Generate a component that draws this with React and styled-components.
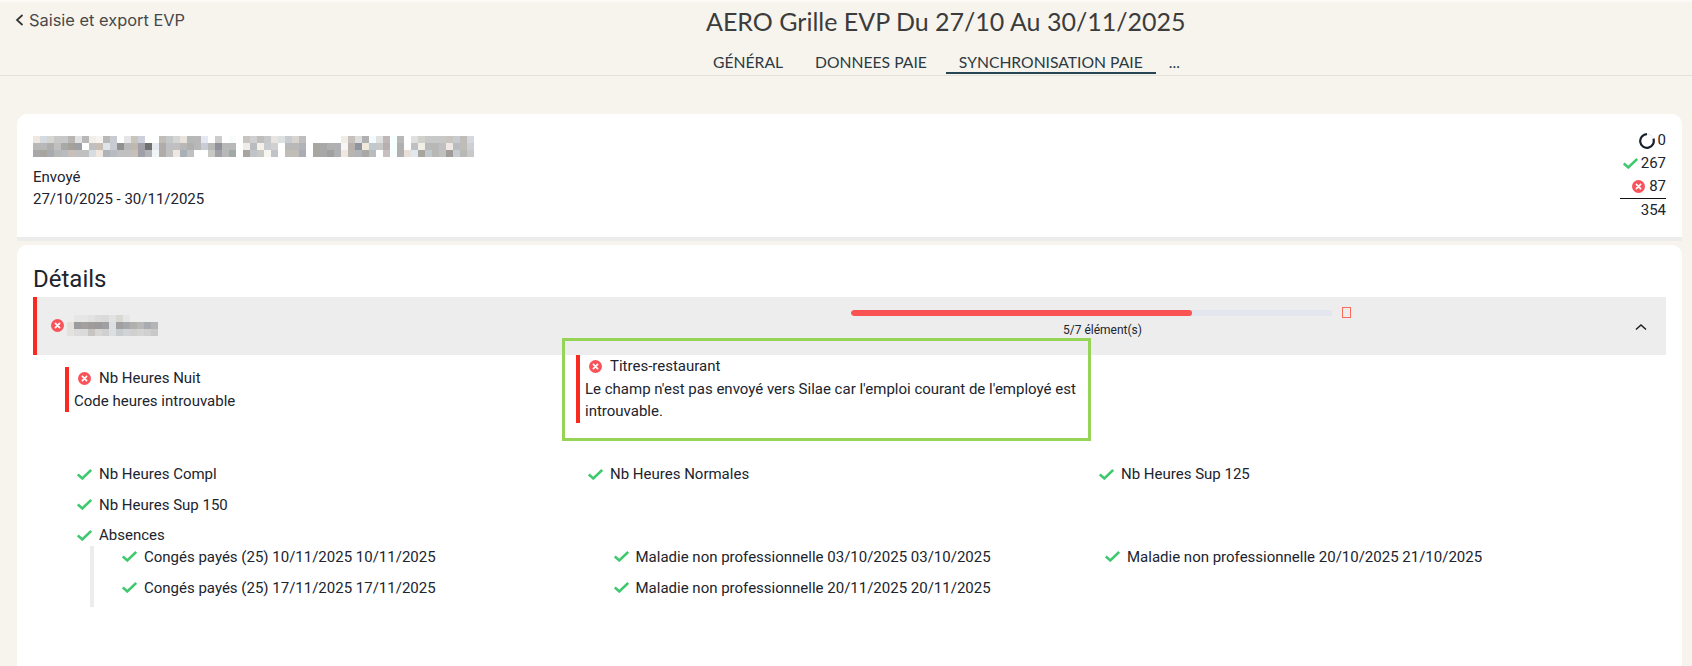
import React from "react";
import styled, { createGlobalStyle } from "styled-components";

const Global = createGlobalStyle`
  html, body { margin: 0; padding: 0; height: 666px; overflow: hidden; background: #f7f4ee; }
  body { font-family: Roboto, "Liberation Sans", sans-serif; color: #20242e; }
  * { box-sizing: border-box; }
`;

const Page = styled.div`
  height: 666px;
  overflow: hidden;
  border-top: 2px solid #fbfaf7;
`;
const Header = styled.header`
  height: 74px;
  border-bottom: 1px solid #e4e1da;
  display: flex;
`;
const BackLink = styled.a`
  width: 706px;
  flex: none;
  display: flex;
  align-items: flex-start;
  gap: 4px;
  padding: 8px 0 0 15px;
  font-family: Inter, sans-serif;
  font-size: 16.4px;
  line-height: 20px;
  color: #484848;
`;
const TitleBlock = styled.div`
  display: flex;
  flex-direction: column;
`;
const Title = styled.h1`
  margin: 0;
  padding-top: 3px;
  font-family: Lato, sans-serif;
  font-weight: 400;
  font-size: 25px;
  line-height: 32px;
  color: #3c3c3c;
  white-space: nowrap;
`;
const Tabs = styled.nav`
  display: flex;
  margin-top: 12px;
  margin-left: -6px;
  height: 26px;
  font-family: Lato, sans-serif;
  font-size: 15.7px;
  line-height: 26px;
  color: #2c3a42;
`;
const Tab = styled.div`
  padding: 0 13px;
  margin-right: ${(p) => p.$gap || 0}px;
  height: 25px;
  white-space: nowrap;
  border-bottom: 2px solid ${(p) => (p.$active ? "#264653" : "transparent")};
`;
const Main = styled.main`
  padding: 38px 10px 0 17px;
  display: flex;
  flex-direction: column;
  gap: 4px;
`;
const SummaryCard = styled.section`
  height: 127px;
  background: #fff;
  border-radius: 10px 10px 0 0;
  border-bottom: 4px solid #ececec;
  padding: 22px 16px 0;
  display: flex;
  justify-content: space-between;
`;
const SummaryText = styled.div`
  font-size: 15px;
  line-height: 22px;
`;
const Mosaic = styled.svg`
  display: block;
  shape-rendering: crispEdges;
`;
const SummaryMosaic = styled(Mosaic)`
  margin-bottom: 9px;
`;
const Counters = styled.div`
  margin-top: -7px;
  display: flex;
  flex-direction: column;
  align-items: flex-end;
  font-size: 15px;
  line-height: 23px;
`;
const Counter = styled.div`
  display: flex;
  align-items: center;
  gap: ${(p) => p.$gap}px;
  height: 23px;
`;
const Total = styled.div`
  width: 46px;
  border-top: 1px solid #111;
  text-align: right;
  line-height: 22px;
`;
const DetailsCard = styled.section`
  height: 440px;
  background: #fff;
  border-radius: 10px 10px 0 0;
  padding: 16px 16px 0;
`;
const DetailsTitle = styled.h2`
  margin: 0;
  font-size: 24px;
  font-weight: 400;
  line-height: 36px;
`;
const GroupRow = styled.div`
  height: 58px;
  background: #ededed;
  border-left: 4px solid #fb2a20;
  display: grid;
  grid-template-columns: 814px 503px 1fr;
  align-items: center;
`;
const GroupName = styled.div`
  display: flex;
  align-items: center;
  gap: 3px;
  padding-left: 14px;
  margin-top: -1px;
`;
const Progress = styled.div`
  display: flex;
  flex-direction: column;
  align-items: center;
  margin-top: -8px;
`;
const ProgressLine = styled.div`
  align-self: stretch;
  display: flex;
  align-items: center;
  gap: 10px;
  height: 12px;
`;
const Track = styled.div`
  flex: none;
  width: 481px;
  height: 6px;
  border-radius: 3px;
  background: #e4e6ef;
  overflow: hidden;
`;
const Fill = styled.div`
  height: 100%;
  border-radius: 3px;
  background: #f95353;
`;
const Stop = styled.div`
  width: 9px;
  height: 11px;
  border: 1px solid #fb6a5a;
  flex: none;
`;
const ProgressLabel = styled.div`
  margin-top: 3px;
  font-size: 12px;
  line-height: 16px;
`;
const Chevron = styled.div`
  justify-self: end;
  display: flex;
  padding: 1px 17px 0 0;
  color: #1f1f1f;
`;
const Errors = styled.div`
  display: grid;
  grid-template-columns: repeat(2, 511px);
  padding: 12px 0 0 32px;
  height: 104px;
  align-items: start;
`;
const ErrorItem = styled.div`
  position: relative;
  width: ${(p) => (p.$raised ? 502 : 400)}px;
  margin-top: ${(p) => (p.$raised ? -12 : 0)}px;
  border-left: 4px solid #fb2a20;
  padding: 0 0 0 5px;
  font-size: 15px;
  line-height: 22.5px;
`;
const ErrorHead = styled.div`
  display: flex;
  align-items: center;
  gap: 8px;
  padding-left: 4px;
`;
const Highlight = styled.div`
  position: absolute;
  left: -18px;
  top: -17px;
  width: 529px;
  height: 103px;
  border: 3px solid #96d458;
  pointer-events: none;
`;
const FieldGrid = styled.div`
  display: grid;
  grid-template-columns: repeat(3, 511px);
  grid-auto-rows: 30.5px;
  padding-left: 44px;
`;
const Field = styled.div`
  display: flex;
  align-items: center;
  gap: 7px;
  font-size: 15px;
  white-space: nowrap;
`;
const SubFields = styled.div`
  margin: -5px 0 0 57px;
  height: 61px;
  border-left: 4px solid #ececec;
  padding: 0 0 0 28px;
  display: grid;
  grid-template-columns: repeat(3, 491.5px);
  grid-auto-rows: 22px;
  row-gap: 9px;
  align-content: start;
`;

const ErrorIcon = ({ size = 13 }) => (
  <svg width={size} height={size} viewBox="0 0 13 13" style={{ flex: "none" }}>
    <circle cx="6.5" cy="6.5" r="6.5" fill="#f9535a" />
    <path d="M4.4 4.4l4.2 4.2M8.6 4.4l-4.2 4.2" stroke="#fff" strokeWidth="1.7" strokeLinecap="round" />
  </svg>
);
const CheckIcon = () => (
  <svg width="15" height="11" viewBox="0 0 15 11" fill="none" style={{ flex: "none" }}>
    <path d="M0.8 5.4l4.5 4L14.2 1" stroke="#3fc96e" strokeWidth="2.6" />
  </svg>
);
const SpinIcon = () => (
  <svg width="16" height="16" viewBox="0 0 16 16" fill="none" style={{ flex: "none" }}>
    <circle cx="8" cy="8" r="6.8" stroke="#ece8ee" strokeWidth="1" />
    <path d="M8 1.2A6.8 6.8 0 1 0 14.4 5.7" stroke="#15202c" strokeWidth="2.2" />
  </svg>
);

const MosaicBlock = ({ rows, cell = 7, className }) => (
  <Mosaic className={className} width={rows[0].length * cell} height={rows.length * cell} aria-hidden="true">
    {rows.map((row, y) =>
      row.map((c, x) => <rect key={x + "-" + y} x={x * cell} y={y * cell} width={cell} height={cell} fill={"#" + c} />)
    )}
  </Mosaic>
);

const titleMosaic = [
  "f0e8e0 d5dae0 d5d5d2 c8c8c8 c8c8c8 b8b6b4 e2e2e2 b8b8b8 f2eeea f6f4f0 b8b8b8 c8ccd0 ffffff e5e5e5 c8c4be ccd0dc ffffff ffffff c0bcb8 c5c8c8 d5d5d5 e8e4dc b5b8b8 b8b8b8 e5e8f0 ffffff cccccc ffffff f8fcfc ffffff c8c4c0 d0d0d0 c0bebc c8c8c8 e8e4e0 dde0e0 c8ccd0 d8d4d0 c0bebc ffffff ffffff ffffff ffffff ffffff f0ece6 c8c0bc dddddd b0b0b0 f5faff e0e0e0 c0b8b8 f8ffff b8b8b8 ffffff e0e0e0 d0d0cc c8c8c8 c8c8c8 c8c8c8 c8c4c0 c8ccd0 c0bcb8 d5d8dc",
  "b8b8b8 b8b8b8 b0aeac c0c0c0 a8a8a6 a4a09c 9ca0a4 ffffff c0c0c0 c8beb4 dde5e8 c8ccd0 909090 b8b8b8 c0b8ae a0a0a8 707070 e5eaf0 b0acaa c0c0c4 c0c0c0 b8b8b8 b0b0ae b8b8b8 c8ccd5 b8b8b8 909098 b8b8b8 b8b8b8 ffffff f0ecea b8bcc0 f5f0e8 c8ccd0 d0d0d0 ffffff b8b8b8 b8b8b8 b0b4b8 ffffff a8a6a0 a8a8a8 b0b0b0 b0b0b4 f8f6f4 b8b0ac 90949e f0e8d8 c0c8d0 c8c8c8 b8b0b0 f8ffff b0b0b0 ffffff c0c0c0 f0f0e8 b8b8b8 b8b8b8 c0c0c0 f0e8e4 b8bcc0 c0bcb8 cccfd4",
  "a8a8a8 a8a4a0 a8acb0 b8b8b8 b8bcc0 c8c0b8 c0c0c0 c0c0c0 d5dde0 f0e8e0 b0b4b8 b8bcc0 c0c0c0 c0c0c0 c8c0b8 a0a0a8 b0b4b8 f0f5f8 b0acaa c0c0c0 f0e8e0 a8b0b8 c0c0c0 ffffff ffffff c8c8c4 a0a0a8 b8b8b8 a0a8a8 ffffff a8a4a0 c0c4c8 c8c8c4 f8f6f0 c0c4c8 ffffff c0bcb8 c0bcb8 a8acb4 ffffff a8a6a0 a8a8a8 a0a09c b0b0b4 f0e8e0 b8b4b0 b0b4b8 a8a8a4 b8bcc0 ffffff c8c0c0 f8ffff b0b0b0 e8e0d8 e0e8f0 a8a49e c0c8cc b8b8b4 c0c0c0 a09c98 c8ccd0 b8b8b4 c8c8c8",
].map((r) => r.split(" "));

const groupMosaic = [
  "ededed e8e6e4 e6e6e6 e2e2e2 dcdcdc dadada e2e2e2 d8d8d4 e6e6e6 ededed ededed ededed ededed",
  "e4e0dc 9c9ca0 a4a0a0 a09c9c 9c9a9a a0a0a4 dcdfe2 a0a0a0 a4a8ac b0b0ac b8b8b8 a8acb0 b4b4b4",
  "e4e2e0 dcdcdc dadada c8c4c4 d6d6d4 d0d0d0 dcdfe2 c8ccd0 d0d4d8 d0d0d0 d4d4d4 d0d0d0 c8c8c8",
].map((r) => r.split(" "));

const fields = ["Nb Heures Compl", "Nb Heures Normales", "Nb Heures Sup 125", "Nb Heures Sup 150"];
const absences = [
  "Congés payés (25) 10/11/2025 10/11/2025",
  "Maladie non professionnelle 03/10/2025 03/10/2025",
  "Maladie non professionnelle 20/10/2025 21/10/2025",
  "Congés payés (25) 17/11/2025 17/11/2025",
  "Maladie non professionnelle 20/11/2025 20/11/2025",
];

export default function App() {
  return (
    <Page>
      <Global />
      <Header>
        <BackLink>
          <svg width="10" height="20" viewBox="0 0 10 20" fill="none">
            <path d="M7.5 5L2 10l5.5 5" stroke="#333" strokeWidth="1.7" />
          </svg>
          Saisie et export EVP
        </BackLink>
        <TitleBlock>
          <Title>AERO Grille EVP Du 27/10 Au 30/11/2025</Title>
          <Tabs>
            <Tab $gap={6}>GÉNÉRAL</Tab>
            <Tab $gap={6}>DONNEES PAIE</Tab>
            <Tab $active>SYNCHRONISATION PAIE</Tab>
            <Tab>...</Tab>
          </Tabs>
        </TitleBlock>
      </Header>
      <Main>
        <SummaryCard>
          <SummaryText>
            <SummaryMosaic as={MosaicBlock} rows={titleMosaic} />
            <div>Envoyé</div>
            <div>27/10/2025 - 30/11/2025</div>
          </SummaryText>
          <Counters>
            <Counter $gap={3}><SpinIcon />0</Counter>
            <Counter $gap={3}><CheckIcon />267</Counter>
            <Counter $gap={4}><ErrorIcon />87</Counter>
            <Total>354</Total>
          </Counters>
        </SummaryCard>
        <DetailsCard>
          <DetailsTitle>Détails</DetailsTitle>
          <GroupRow>
            <GroupName>
              <ErrorIcon />
              <MosaicBlock rows={groupMosaic} />
            </GroupName>
            <Progress>
              <ProgressLine>
                <Track><Fill style={{ width: `${(341 / 481) * 100}%` }} /></Track>
                <Stop />
              </ProgressLine>
              <ProgressLabel>5/7 élément(s)</ProgressLabel>
            </Progress>
            <Chevron>
              <svg width="16" height="16" viewBox="0 0 16 16" fill="none">
                <path d="M3 10.5L8 6l5 4.5" stroke="#1f1f1f" strokeWidth="1.5" />
              </svg>
            </Chevron>
          </GroupRow>
          <Errors>
            <ErrorItem>
              <ErrorHead><ErrorIcon />Nb Heures Nuit</ErrorHead>
              <div>Code heures introuvable</div>
            </ErrorItem>
            <ErrorItem $raised>
              <ErrorHead><ErrorIcon />Titres-restaurant</ErrorHead>
              <div>Le champ n'est pas envoyé vers Silae car l'emploi courant de l'employé est introuvable.</div>
              <Highlight />
            </ErrorItem>
          </Errors>
          <FieldGrid>
            {fields.map((f) => (
              <Field key={f}><CheckIcon />{f}</Field>
            ))}
          </FieldGrid>
          <FieldGrid>
            <Field><CheckIcon />Absences</Field>
          </FieldGrid>
          <SubFields>
            {absences.map((f) => (
              <Field key={f}><CheckIcon />{f}</Field>
            ))}
          </SubFields>
        </DetailsCard>
      </Main>
    </Page>
  );
}
